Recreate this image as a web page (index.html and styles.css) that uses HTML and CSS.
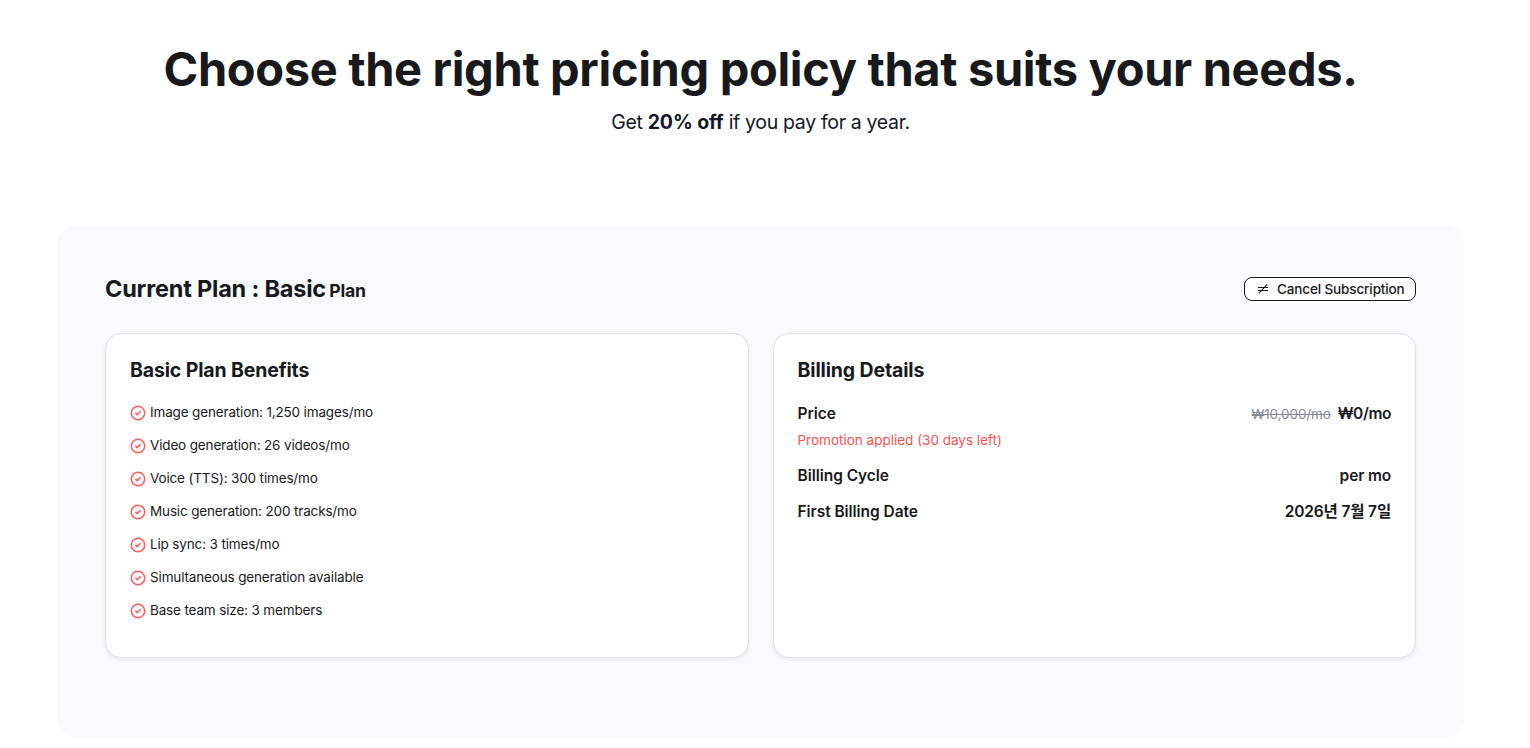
FILE: index.html
```html
<!DOCTYPE html>
<html lang="en">
<head>
<meta charset="utf-8">
<title>Pricing</title>
<link rel="stylesheet" href="styles.css">
</head>
<body>
<svg class="sprite" aria-hidden="true">
  <symbol id="check" viewBox="0 0 16 16">
    <circle cx="8" cy="8" r="6.7" fill="none" stroke="currentColor" stroke-width="1.5"/>
    <path d="M5.4 7.9 7.2 9.6 10.6 6.3" fill="none" stroke="currentColor" stroke-width="1.6"/>
  </symbol>
</svg>
<main class="page">
  <header class="hero">
    <h1 class="hero-title">Choose the right pricing policy that suits your needs.</h1>
    <p class="hero-sub">Get <strong>20% off</strong> if you pay for a year.</p>
  </header>
  <section class="panel">
    <div class="panel-head">
      <h2 class="plan">Current Plan : Basic <span class="plan-suffix">Plan</span></h2>
      <button class="cancel" type="button">
        <svg class="cancel-icon" viewBox="0 0 12 12"><path d="M1 4.5H11M1 7.5H11M10.2 1.4 1.8 10.4" fill="none" stroke="currentColor" stroke-width="1.1"/></svg>
        <span>Cancel Subscription</span>
      </button>
    </div>
    <div class="cards">
      <article class="card">
        <h3 class="card-title">Basic Plan Benefits</h3>
        <ul class="benefits">
          <li class="benefit"><svg class="check"><use href="#check"/></svg>Image generation: 1,250 images/mo</li>
          <li class="benefit"><svg class="check"><use href="#check"/></svg>Video generation: 26 videos/mo</li>
          <li class="benefit"><svg class="check"><use href="#check"/></svg>Voice (TTS): 300 times/mo</li>
          <li class="benefit"><svg class="check"><use href="#check"/></svg>Music generation: 200 tracks/mo</li>
          <li class="benefit"><svg class="check"><use href="#check"/></svg>Lip sync: 3 times/mo</li>
          <li class="benefit"><svg class="check"><use href="#check"/></svg>Simultaneous generation available</li>
          <li class="benefit"><svg class="check"><use href="#check"/></svg>Base team size: 3 members</li>
        </ul>
      </article>
      <article class="card">
        <h3 class="card-title">Billing Details</h3>
        <div class="rows">
          <div class="price">
            <div class="row"><span>Price</span><span class="amount"><s class="old-price">₩10,000/mo</s><span class="new-price">₩0/mo</span></span></div>
            <p class="promo">Promotion applied (30 days left)</p>
          </div>
          <div class="row"><span>Billing Cycle</span><span class="value">per mo</span></div>
          <div class="row"><span>First Billing Date</span><span class="value">2026년 7월 7일</span></div>
        </div>
      </article>
    </div>
  </section>
</main>
</body>
</html>
```

FILE: styles.css
```css
* { box-sizing: border-box; }
body {
  margin: 0;
  background: #fff;
  color: #17191c;
  font-family: Inter, "Noto Sans CJK KR", sans-serif;
  overflow: hidden;
}
h1, h2, h3, p, ul { margin: 0; padding: 0; }
.sprite { display: none; }
.page { width: 1521px; padding: 40px 57px 0; }
.hero { text-align: center; }
.hero-title {
  font-size: 47px;
  line-height: 58px;
  font-weight: 700;
  letter-spacing: -.34px;
  white-space: nowrap;
}
.hero-sub {
  margin-top: 9px;
  font-size: 19.5px;
  line-height: 30px;
  font-weight: 400;
  letter-spacing: -.33px;
  color: #111827;
}
.hero-sub strong { font-weight: 650; letter-spacing: -.1px; }
.panel {
  height: 513px;
  margin-top: 88px;
  padding: 48px;
  border-radius: 20px;
  background: #f9fafc;
}
.panel-head {
  display: flex;
  align-items: center;
  justify-content: space-between;
  height: 32px;
  margin-bottom: 28px;
}
.plan {
  padding-top: 2px;
  font-size: 23.5px;
  line-height: 32px;
  font-weight: 650;
  letter-spacing: -.2px;
}
.plan-suffix { font-size: 17.6px; margin-left: -2px; }
.cancel {
  display: flex;
  align-items: center;
  gap: 8px;
  width: 172px;
  height: 24px;
  padding: 0 0 0 12px;
  border: 1px solid #17191c;
  border-radius: 8px;
  background: #fff;
  color: #17191c;
  font: 500 13.5px/20px Inter, sans-serif;
  letter-spacing: -.13px;
  white-space: nowrap;
}
.cancel-icon { width: 12px; height: 12px; flex: none; }
.cards { display: grid; grid-template-columns: 1fr 1fr; gap: 24px; }
.card {
  height: 325px;
  padding: 22px 24px;
  border: 1px solid #dfe1e6;
  border-radius: 16px;
  background: #fff;
  box-shadow: 0 2px 4px rgba(0, 0, 0, .07);
}
.card-title {
  font-size: 19.5px;
  line-height: 28px;
  font-weight: 650;
  letter-spacing: -.14px;
}
.benefits { display: grid; gap: 13px; margin-top: 18px; list-style: none; }
.benefit {
  display: flex;
  align-items: center;
  gap: 4px;
  font-size: 13.5px;
  line-height: 20px;
  letter-spacing: -.15px;
}
.check { width: 16px; height: 16px; margin-top: 2px; color: #ff5c5c; }
.rows { display: grid; gap: 12px; margin-top: 18px; }
.row {
  display: flex;
  justify-content: space-between;
  font-size: 15.5px;
  line-height: 24px;
  font-weight: 600;
  letter-spacing: -.05px;
}
.value { letter-spacing: -.15px; }
.amount { display: flex; align-items: baseline; gap: 7px; }
.old-price { font-size: 13.5px; font-weight: 400; letter-spacing: -.1px; color: #858b96; }
.new-price { letter-spacing: -.4px; }
.promo {
  margin: 3px 0 1px;
  font-size: 13.5px;
  line-height: 22px;
  color: #ff5050;
}
```
